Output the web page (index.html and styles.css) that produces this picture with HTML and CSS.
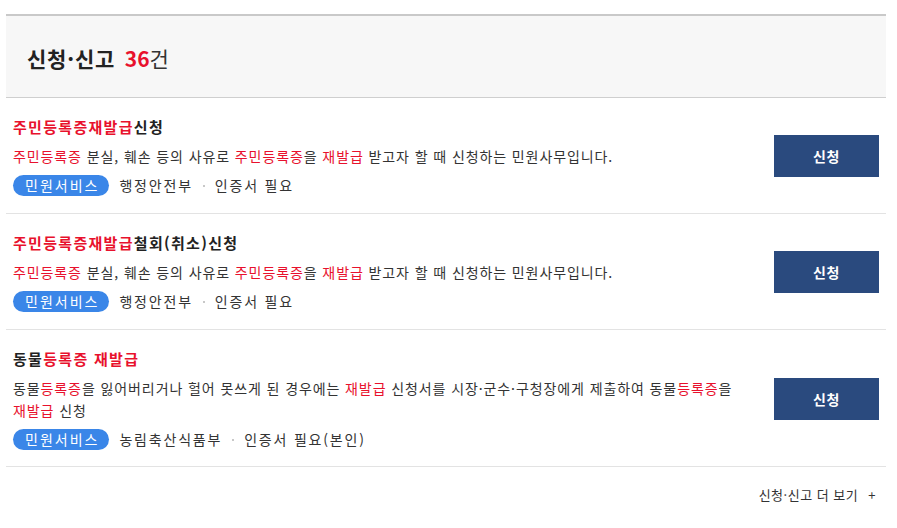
FILE: index.html
```html
<!DOCTYPE html>
<html lang="ko">
<head>
<meta charset="utf-8">
<link rel="stylesheet" href="styles.css">
</head>
<body>
<div class="wrap">
  <div class="head">
    <h2 class="head-title">신청·신고 <strong class="count">36</strong><span class="unit">건</span></h2>
  </div>
  <ul class="list">
    <li class="item">
      <div class="info">
        <p class="title"><em>주민등록증재발급</em>신청</p>
        <p class="desc"><em>주민등록증</em> 분실, 훼손 등의 사유로 <em>주민등록증</em>을 <em>재발급</em> 받고자 할 때 신청하는 민원사무입니다.</p>
        <div class="meta"><span class="tag">민원서비스</span><span class="org">행정안전부</span><span class="dot"></span><span class="cert">인증서 필요</span></div>
      </div>
      <a class="btn">신청</a>
    </li>
    <li class="item">
      <div class="info">
        <p class="title"><em>주민등록증재발급</em>철회(취소)신청</p>
        <p class="desc"><em>주민등록증</em> 분실, 훼손 등의 사유로 <em>주민등록증</em>을 <em>재발급</em> 받고자 할 때 신청하는 민원사무입니다.</p>
        <div class="meta"><span class="tag">민원서비스</span><span class="org">행정안전부</span><span class="dot"></span><span class="cert">인증서 필요</span></div>
      </div>
      <a class="btn">신청</a>
    </li>
    <li class="item">
      <div class="info">
        <p class="title">동물<em>등록증 재발급</em></p>
        <p class="desc">동물<em>등록증</em>을 잃어버리거나 헐어 못쓰게 된 경우에는 <em>재발급</em> 신청서를 시장·군수·구청장에게 제출하여 동물<em>등록증</em>을 <em>재발급</em> 신청</p>
        <div class="meta"><span class="tag">민원서비스</span><span class="org">농림축산식품부</span><span class="dot"></span><span class="cert">인증서 필요(본인)</span></div>
      </div>
      <a class="btn">신청</a>
    </li>
  </ul>
  <div class="more"><a class="more-link">신청·신고 더 보기<span class="plus">+</span></a></div>
</div>
</body>
</html>
```
FILE: styles.css
```css
* { box-sizing: border-box; }
html, body { margin: 0; padding: 0; background: #fff; }
body {
  font-family: "Noto Sans CJK KR", "Noto Sans", sans-serif;
  color: #333;
}
.wrap {
  width: 880px;
  margin: 14px 0 0 6px;
}
.head {
  background: #f7f7f7;
  border-top: 2px solid #c9c9c9;
  border-bottom: 1px solid #cfcfcf;
  padding: 28px 21px 25px;
}
.head-title {
  margin: 0;
  font-size: 21px;
  line-height: 28px;
  font-weight: 700;
  color: #222;
  letter-spacing: 0.8px;
}
.count { color: #e8112d; font-weight: 700; margin-left: 3px; letter-spacing: 0; }
.unit { font-weight: 400; color: #333; }
.list { list-style: none; margin: 0; padding: 0; }
.item {
  display: flex;
  align-items: center;
  gap: 30px;
  padding: 18px 7px 17px;
  border-bottom: 1px solid #e3e3e3;
}
.item:last-child { padding-bottom: 16px; }
.info { flex: 1; min-width: 0; }
.title {
  margin: 0 0 7px;
  font-size: 15px;
  line-height: 22px;
  font-weight: 700;
  color: #222;
  letter-spacing: 1.3px;
}
em { font-style: normal; color: #e8112d; }
.desc {
  margin: 0 0 8px;
  font-size: 14px;
  line-height: 22px;
  color: #333;
  letter-spacing: 0.9px;
}
.meta {
  display: flex;
  align-items: center;
  font-size: 14px;
  line-height: 21px;
  color: #333;
  letter-spacing: 1.8px;
}
.tag {
  background: #3a86e8;
  color: #fff;
  border-radius: 11px;
  padding: 0 10px 0 12px;
  height: 21px;
  line-height: 21px;
  letter-spacing: 2px;
  margin-right: 10px;
}
.dot {
  width: 2px;
  height: 2px;
  background: #c8c8c8;
  margin: 0 10px;
}
.btn {
  flex: none;
  width: 105px;
  height: 42px;
  background: #2a4a7e;
  color: #fff;
  font-size: 14px;
  font-weight: 700;
  letter-spacing: 0.5px;
  display: flex;
  align-items: center;
  justify-content: center;
}
.more {
  display: flex;
  justify-content: flex-end;
  padding: 18px 10px 0;
}
.more-link {
  font-size: 13px;
  line-height: 20px;
  color: #333;
  letter-spacing: 0.5px;
}
.plus { margin-left: 10px; }
```
